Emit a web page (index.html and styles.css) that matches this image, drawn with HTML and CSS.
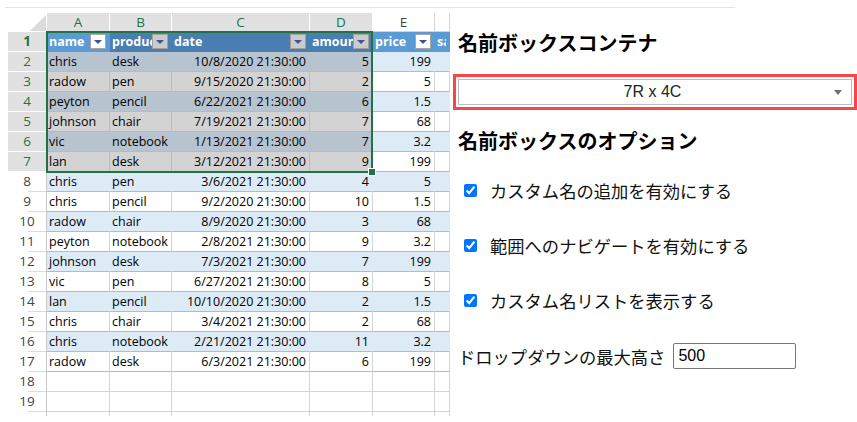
FILE: index.html
```html
<!DOCTYPE html>
<html lang="ja">
<head>
<meta charset="utf-8">
<title>Name Box</title>
<link rel="stylesheet" href="styles.css">
</head>
<body>
<div class="topline"></div>
<div class="main">
  <div class="sheet">
    <div class="row colhead">
      <div class="c corner"></div>
      <div class="c ch on">A</div>
      <div class="c ch on">B</div>
      <div class="c ch on">C</div>
      <div class="c ch on">D</div>
      <div class="c ch">E</div>
      <div class="c ch"></div>
    </div>
    <div class="row hdr">
      <div class="c rh on">1</div>
      <div class="c hc"><span class="lbl">name</span><span class="fb"></span></div>
      <div class="c hc s"><span class="lbl">product</span><span class="fb g"></span></div>
      <div class="c hc s"><span class="lbl">date</span><span class="fb g"></span></div>
      <div class="c hc s"><span class="lbl">amount</span><span class="fb g"></span></div>
      <div class="c hc"><span class="lbl">price</span><span class="fb"></span></div>
      <div class="c hc"><span class="lbl">sales</span></div>
    </div>
    <div class="row band">
      <div class="c rh on">2</div>
      <div class="c s">chris</div><div class="c s">desk</div><div class="c s r">10/8/2020 21:30:00</div><div class="c s r">5</div><div class="c r">199</div><div class="c"></div>
    </div>
    <div class="row plain">
      <div class="c rh on">3</div>
      <div class="c s">radow</div><div class="c s">pen</div><div class="c s r">9/15/2020 21:30:00</div><div class="c s r">2</div><div class="c r">5</div><div class="c"></div>
    </div>
    <div class="row band">
      <div class="c rh on">4</div>
      <div class="c s">peyton</div><div class="c s">pencil</div><div class="c s r">6/22/2021 21:30:00</div><div class="c s r">6</div><div class="c r">1.5</div><div class="c"></div>
    </div>
    <div class="row plain">
      <div class="c rh on">5</div>
      <div class="c s">johnson</div><div class="c s">chair</div><div class="c s r">7/19/2021 21:30:00</div><div class="c s r">7</div><div class="c r">68</div><div class="c"></div>
    </div>
    <div class="row band">
      <div class="c rh on">6</div>
      <div class="c s">vic</div><div class="c s">notebook</div><div class="c s r">1/13/2021 21:30:00</div><div class="c s r">7</div><div class="c r">3.2</div><div class="c"></div>
    </div>
    <div class="row plain">
      <div class="c rh on">7</div>
      <div class="c s">lan</div><div class="c s">desk</div><div class="c s r">3/12/2021 21:30:00</div><div class="c s r">9</div><div class="c r">199</div><div class="c"></div>
    </div>
    <div class="row band">
      <div class="c rh">8</div>
      <div class="c">chris</div><div class="c">pen</div><div class="c r">3/6/2021 21:30:00</div><div class="c r">4</div><div class="c r">5</div><div class="c"></div>
    </div>
    <div class="row plain">
      <div class="c rh">9</div>
      <div class="c">chris</div><div class="c">pencil</div><div class="c r">9/2/2020 21:30:00</div><div class="c r">10</div><div class="c r">1.5</div><div class="c"></div>
    </div>
    <div class="row band">
      <div class="c rh">10</div>
      <div class="c">radow</div><div class="c">chair</div><div class="c r">8/9/2020 21:30:00</div><div class="c r">3</div><div class="c r">68</div><div class="c"></div>
    </div>
    <div class="row plain">
      <div class="c rh">11</div>
      <div class="c">peyton</div><div class="c">notebook</div><div class="c r">2/8/2021 21:30:00</div><div class="c r">9</div><div class="c r">3.2</div><div class="c"></div>
    </div>
    <div class="row band">
      <div class="c rh">12</div>
      <div class="c">johnson</div><div class="c">desk</div><div class="c r">7/3/2021 21:30:00</div><div class="c r">7</div><div class="c r">199</div><div class="c"></div>
    </div>
    <div class="row plain">
      <div class="c rh">13</div>
      <div class="c">vic</div><div class="c">pen</div><div class="c r">6/27/2021 21:30:00</div><div class="c r">8</div><div class="c r">5</div><div class="c"></div>
    </div>
    <div class="row band">
      <div class="c rh">14</div>
      <div class="c">lan</div><div class="c">pencil</div><div class="c r">10/10/2020 21:30:00</div><div class="c r">2</div><div class="c r">1.5</div><div class="c"></div>
    </div>
    <div class="row plain">
      <div class="c rh">15</div>
      <div class="c">chris</div><div class="c">chair</div><div class="c r">3/4/2021 21:30:00</div><div class="c r">2</div><div class="c r">68</div><div class="c"></div>
    </div>
    <div class="row band">
      <div class="c rh">16</div>
      <div class="c">chris</div><div class="c">notebook</div><div class="c r">2/21/2021 21:30:00</div><div class="c r">11</div><div class="c r">3.2</div><div class="c"></div>
    </div>
    <div class="row plain">
      <div class="c rh">17</div>
      <div class="c">radow</div><div class="c">desk</div><div class="c r">6/3/2021 21:30:00</div><div class="c r">6</div><div class="c r">199</div><div class="c"></div>
    </div>
    <div class="row empty">
      <div class="c rh">18</div>
      <div class="c"></div><div class="c"></div><div class="c"></div><div class="c"></div><div class="c"></div><div class="c"></div>
    </div>
    <div class="row empty">
      <div class="c rh">19</div>
      <div class="c"></div><div class="c"></div><div class="c"></div><div class="c"></div><div class="c"></div><div class="c"></div>
    </div>
    <div class="row empty">
      <div class="c rh">20</div>
      <div class="c"></div><div class="c"></div><div class="c"></div><div class="c"></div><div class="c"></div><div class="c"></div>
    </div>
    <div class="selbox"></div>
    <div class="handle"></div>
  </div>

  <div class="panel">
    <div class="title">名前ボックスコンテナ</div>
    <div class="frame">
      <div class="namebox"><span class="val">7R x 4C</span><span class="arr"></span></div>
    </div>
    <div class="title title2">名前ボックスのオプション</div>
    <label class="opt first"><input type="checkbox" checked><span class="txt">カスタム名の追加を有効にする</span></label>
    <label class="opt"><input type="checkbox" checked><span class="txt">範囲へのナビゲートを有効にする</span></label>
    <label class="opt"><input type="checkbox" checked><span class="txt">カスタム名リストを表示する</span></label>
    <div class="field"><span>ドロップダウンの最大高さ</span><input type="text" value="500"></div>
  </div>
</div>
</body>
</html>
```
FILE: styles.css
```css
body {
  margin: 0;
  background: #fff;
}

.topline {
  margin: 7px 0 0 5px;
  width: 730px;
  height: 1px;
  background: #e3e3e3;
}

.main {
  display: flex;
  margin-top: 5px;
}

/* ---------- sheet ---------- */
.sheet {
  position: relative;
  flex: none;
  margin-left: 8px;
  width: 442px;
  height: 403px;
  overflow: hidden;
  font-family: "Open Sans", "Liberation Sans", sans-serif;
  font-size: 12.5px;
  color: #000;
}

.row {
  display: grid;
  grid-template-columns: 39px 63px 62px 138px 63px 62px 15px;
  height: 20px;
}

.row.colhead {
  height: 19px;
}

.c {
  box-sizing: border-box;
  border-right: 1px solid #d4d4d4;
  border-bottom: 1px solid #d4d4d4;
  padding: 0 2px;
  line-height: 19px;
  white-space: nowrap;
  overflow: hidden;
  background: #fff;
}

.r {
  text-align: right;
  padding-right: 3px;
}

/* column header */
.corner {
  position: relative;
  border-right: none;
  border-bottom: none;
}

.corner::after {
  content: "";
  position: absolute;
  right: 1px;
  bottom: 1px;
  border-style: solid;
  border-width: 0 0 16px 16px;
  border-color: transparent transparent #dadada transparent;
}

.ch {
  text-align: center;
  font-size: 13.5px;
  line-height: 18px;
  color: #444;
}

.ch.on {
  background: #e1e1e1;
  color: #217346;
  border-right-color: #fff;
  border-bottom-color: #e1e1e1;
}

/* header row */
.hdr .c {
  background: #5b9bd5;
  color: #fff;
  font-weight: bold;
  border-right-color: #5b9bd5;
  border-bottom-color: #5b9bd5;
}

.hdr .c.s {
  background: #4a7db0;
  border-right-color: #4a7db0;
  border-bottom-color: #4a7db0;
}

.hc {
  display: flex;
  align-items: center;
  padding-right: 3px;
}

.lbl {
  flex: 1;
  min-width: 0;
  overflow: hidden;
}

.fb {
  flex: none;
  box-sizing: border-box;
  width: 16px;
  height: 15px;
  border: 1px solid #a6a6a6;
  background: #fff;
  display: flex;
  align-items: center;
  justify-content: center;
}

.fb::after {
  content: "";
  border-left: 4px solid transparent;
  border-right: 4px solid transparent;
  border-top: 4px solid #3d5496;
  margin-top: 1px;
}

.fb.g {
  background: #cbcbcb;
  border-color: #a0a0a0;
}

/* table rows */
.band .c {
  background: #ddebf7;
  border-right-color: #ddebf7;
  border-bottom-color: #9bc2e6;
}

.plain .c {
  border-bottom-color: #9bc2e6;
}

.band .c.s {
  background: #b7c3cf;
  border-right-color: #b7c3cf;
}

.plain .c.s {
  background: #d3d3d3;
  border-right-color: #bdbdbd;
}

/* row headers */
.row .rh {
  text-align: center;
  font-size: 13.5px;
  color: #444;
  padding: 0;
  background-color: #fff;
  border-right: 1px solid #c8c8c8;
  border-bottom: none;
  background-image: linear-gradient(#dcdcdc, #dcdcdc);
  background-repeat: no-repeat;
  background-position: right bottom;
  background-size: 18px 1px;
}

.row .rh.on {
  background-color: #e1e1e1;
  color: #217346;
  background-image: linear-gradient(#fff, #fff);
  background-size: 100% 1px;
}

/* selection overlay */
.selbox {
  position: absolute;
  left: 38px;
  top: 18px;
  width: 327px;
  height: 142px;
  box-sizing: border-box;
  border: 2px solid #217346;
  pointer-events: none;
}

.handle {
  position: absolute;
  left: 360px;
  top: 155px;
  width: 6px;
  height: 6px;
  background: #217346;
  border: 1px solid #fff;
}

/* ---------- panel ---------- */
.panel {
  flex: 1;
  min-width: 0;
  padding-left: 3px;
  display: flex;
  flex-direction: column;
  font-family: "Noto Sans CJK JP", "Noto Sans", sans-serif;
  color: #111;
}

.title {
  margin: 18px 0 0 5px;
  font-size: 20px;
  line-height: 24px;
  font-weight: bold;
  color: #000;
}

.title2 {
  margin-top: 19px;
}

.frame {
  box-sizing: border-box;
  width: 404px;
  margin-top: 19px;
  border: 3px solid #f44848;
  padding: 2px;
}

.namebox {
  box-sizing: border-box;
  height: 26px;
  border: 1px solid #bdbdbd;
  display: flex;
  align-items: center;
  padding: 0 9px 0 12px;
  font-family: "Liberation Sans", Arial, sans-serif;
  font-size: 16px;
  color: #222;
}

.namebox .val {
  flex: 1;
  text-align: center;
}

.namebox .arr {
  width: 0;
  height: 0;
  border-left: 4px solid transparent;
  border-right: 4px solid transparent;
  border-top: 5px solid #707070;
}

.opt {
  display: flex;
  align-items: center;
  height: 24px;
  margin-top: 31px;
  padding-left: 11px;
  font-size: 17.3px;
}

.opt.first {
  margin-top: 25px;
}

.opt input {
  margin: 0;
  width: 13px;
  height: 13px;
}

.opt .txt {
  margin-left: 13px;
}

.field {
  display: flex;
  align-items: center;
  height: 26px;
  margin-top: 31px;
  padding-left: 5px;
  font-size: 17.3px;
}

.field input {
  box-sizing: border-box;
  margin: 0 0 0 8px;
  width: 123px;
  height: 26px;
  border: 1px solid #767676;
  border-radius: 2px;
  padding: 0 4px;
  font-family: "Liberation Sans", Arial, sans-serif;
  font-size: 16px;
  color: #000;
}
```
